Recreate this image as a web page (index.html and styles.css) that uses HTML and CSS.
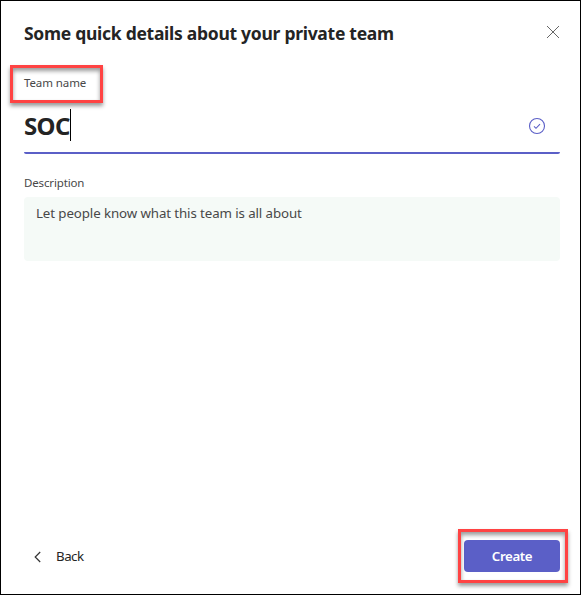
FILE: index.html
```html
<!DOCTYPE html>
<html lang="en">
<head>
<meta charset="utf-8">
<title>Create team</title>
<link rel="stylesheet" href="styles.css">
</head>
<body>
<main class="dialog">
  <header class="header">
    <h1 class="title">Some quick details about your private team</h1>
    <svg class="close" width="14" height="14" viewBox="0 0 14 14"><path d="M1 1l12 12M13 1L1 13"/></svg>
  </header>
  <div class="label name-label"><span class="name-text">Team name</span><span class="mark mark-name"></span></div>
  <div class="name-field">
    <span class="name-value">SOC</span><span class="caret"></span>
    <svg class="valid" width="18" height="18" viewBox="0 0 18 18"><circle cx="9" cy="9" r="7.5"/><path d="M6 9.3l2 2 4-4.2"/></svg>
  </div>
  <div class="label desc-label"><span class="desc-text">Description</span></div>
  <div class="desc-field"><span class="placeholder">Let people know what this team is all about</span></div>
  <footer class="footer">
    <div class="back">
      <svg class="chevron" width="8" height="12" viewBox="0 0 8 12"><path d="M6.2 1L1.2 6l5 5"/></svg>
      <span class="back-text">Back</span>
    </div>
    <div class="create"><span class="create-text">Create</span><span class="mark mark-create"></span></div>
  </footer>
</main>
</body>
</html>
```
FILE: styles.css
```css
* { box-sizing: border-box; }
body { margin: 0; background: #fff; font-family: "Noto Sans", "Open Sans", sans-serif; color: #242424; }
.dialog { width: 581px; height: 595px; border: 1px solid #000; padding: 20px 20px 22px 23px; display: flex; flex-direction: column; }
.header { display: flex; justify-content: space-between; align-items: flex-start; height: 46px; }
.title { margin: 0; font-size: 17.5px; line-height: 25px; font-weight: 700; letter-spacing: -0.28px; white-space: nowrap; }
.close { margin-top: 4px; fill: none; stroke: #666; stroke-width: 1; }
.label { height: 32px; font-size: 11.5px; line-height: 31px; color: #484848; }
.name-label { position: relative; letter-spacing: -0.1px; }
.name-field { display: flex; align-items: center; height: 55px; border-bottom: 2px solid #5b5fc7; border-radius: 2px; }
.name-value { font-size: 24px; line-height: 32px; font-weight: 700; letter-spacing: -0.6px; }
.caret { width: 1px; height: 32px; margin-bottom: 2px; background: #000; }
.valid { margin: 0 14px 0 auto; fill: none; stroke: #5b5fc7; stroke-width: 1.1; }
.desc-label { margin-top: 13px; height: 30px; line-height: 31px; letter-spacing: -0.15px; }
.desc-field { height: 64px; padding: 6px 12px; border-radius: 4px; background: #f5faf7; font-size: 13.3px; line-height: 20px; letter-spacing: -0.1px; color: #484848; }
.footer { display: flex; justify-content: space-between; align-items: center; height: 32px; margin-top: auto; }
.back { display: flex; align-items: center; gap: 14px; padding-left: 10px; font-size: 13.3px; line-height: 32px; letter-spacing: -0.5px; }
.chevron { margin-top: 1px; fill: none; stroke: #333; stroke-width: 1.2; }
.create { position: relative; width: 96px; height: 32px; border-radius: 4px; background: #5b5fc7; color: #fff; font-size: 13.3px; font-weight: 600; line-height: 32px; text-align: center; letter-spacing: -0.4px; }
.mark { position: absolute; border: 3px solid #ff4343; box-shadow: 0 3px 4px rgba(0,0,0,.4), inset 0 3px 4px rgba(0,0,0,.4); }
.mark-name { left: -14px; top: -2px; width: 93px; height: 38px; }
.mark-create { left: -6px; top: -11px; width: 110px; height: 54px; }
```
